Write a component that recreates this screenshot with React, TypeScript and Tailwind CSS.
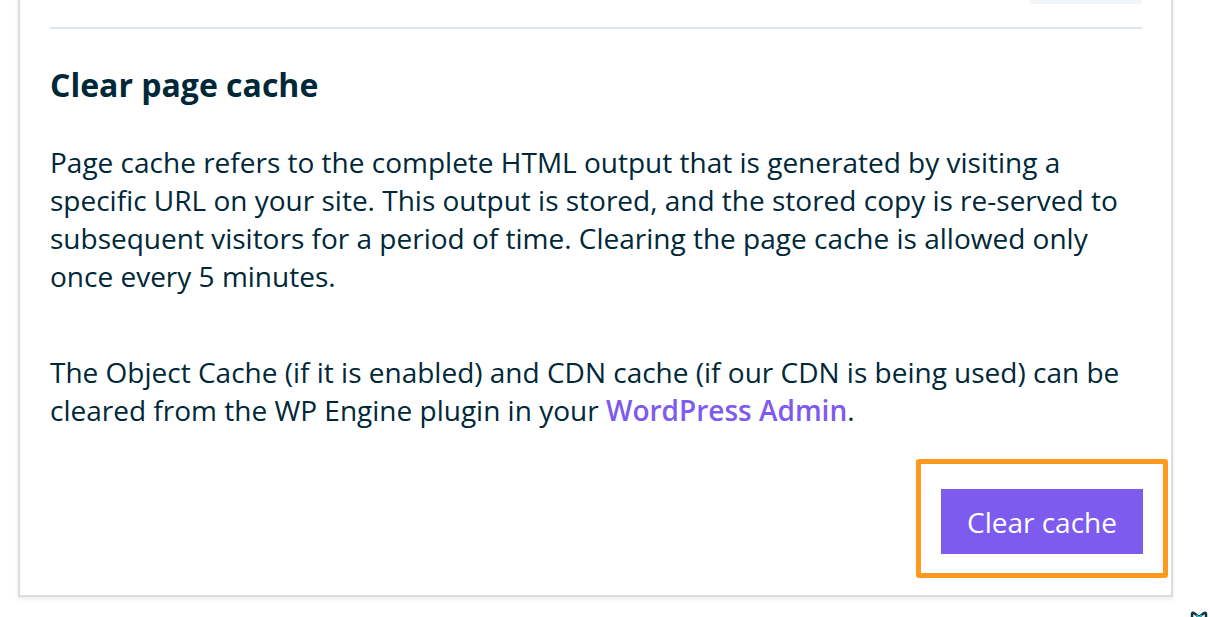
export default function App() {
  return (
    <div className="relative h-[617px] w-[1210px] overflow-hidden bg-white font-['Open_Sans',sans-serif] text-[#002838]">
      <div className="ml-[18px] mt-[-10px] w-[1155px] border-2 border-[#dcdcdc] bg-white pl-[30px] pr-[29px] pb-[17px] shadow-[0_2px_4px_rgba(0,0,0,0.08)]">
        <div className="flex justify-end">
          <div className="h-[12px] w-[112px] bg-[#f2f5f8]" />
        </div>
        <div className="mt-[23px] h-[2px] bg-[#dfe8f0]" />

        <h2 className="mt-[34px] text-[32px] font-bold leading-[44px]">Clear page cache</h2>

        <p className="mt-[36px] text-[28px] leading-[38px]">
          Page cache refers to the complete HTML output that is generated by visiting a specific URL on
          your site. This output is stored, and the stored copy is re-served to subsequent visitors for a
          period of time. Clearing the page cache is allowed only once every 5 minutes.
        </p>

        <p className="mt-[58px] text-[28px] leading-[38px]">
          The Object Cache (if it is enabled) and CDN cache (if our CDN is being used) can be cleared
          from the WP Engine plugin in your{" "}
          <a href="#" className="font-semibold text-[#7e5bef]">
            WordPress Admin
          </a>
          .
        </p>

        <div className="mt-[30px] flex justify-end">
          <div className="mr-[-26px] rounded-[3px] border-[5px] border-[#ff9a1f] pl-[20px] pr-[20px] pt-[25px] pb-[19px]">
            <button className="h-[65px] w-[202px] bg-[#7e5bef] text-[28px] text-white">Clear cache</button>
          </div>
        </div>
      </div>

      <svg className="absolute left-[1190px] top-[608px]" width="20" height="12" viewBox="0 0 20 12">
        <path d="M2 12 L2 6 Q2 4 4 5 L9 9 L14 5 Q16 4 16 6 L16 12" fill="none" stroke="#0b3440" strokeWidth="2.5" />
        <path d="M6 7 L9 9 L12 7" fill="none" stroke="#21c6d8" strokeWidth="1.5" />
      </svg>
    </div>
  );
}
